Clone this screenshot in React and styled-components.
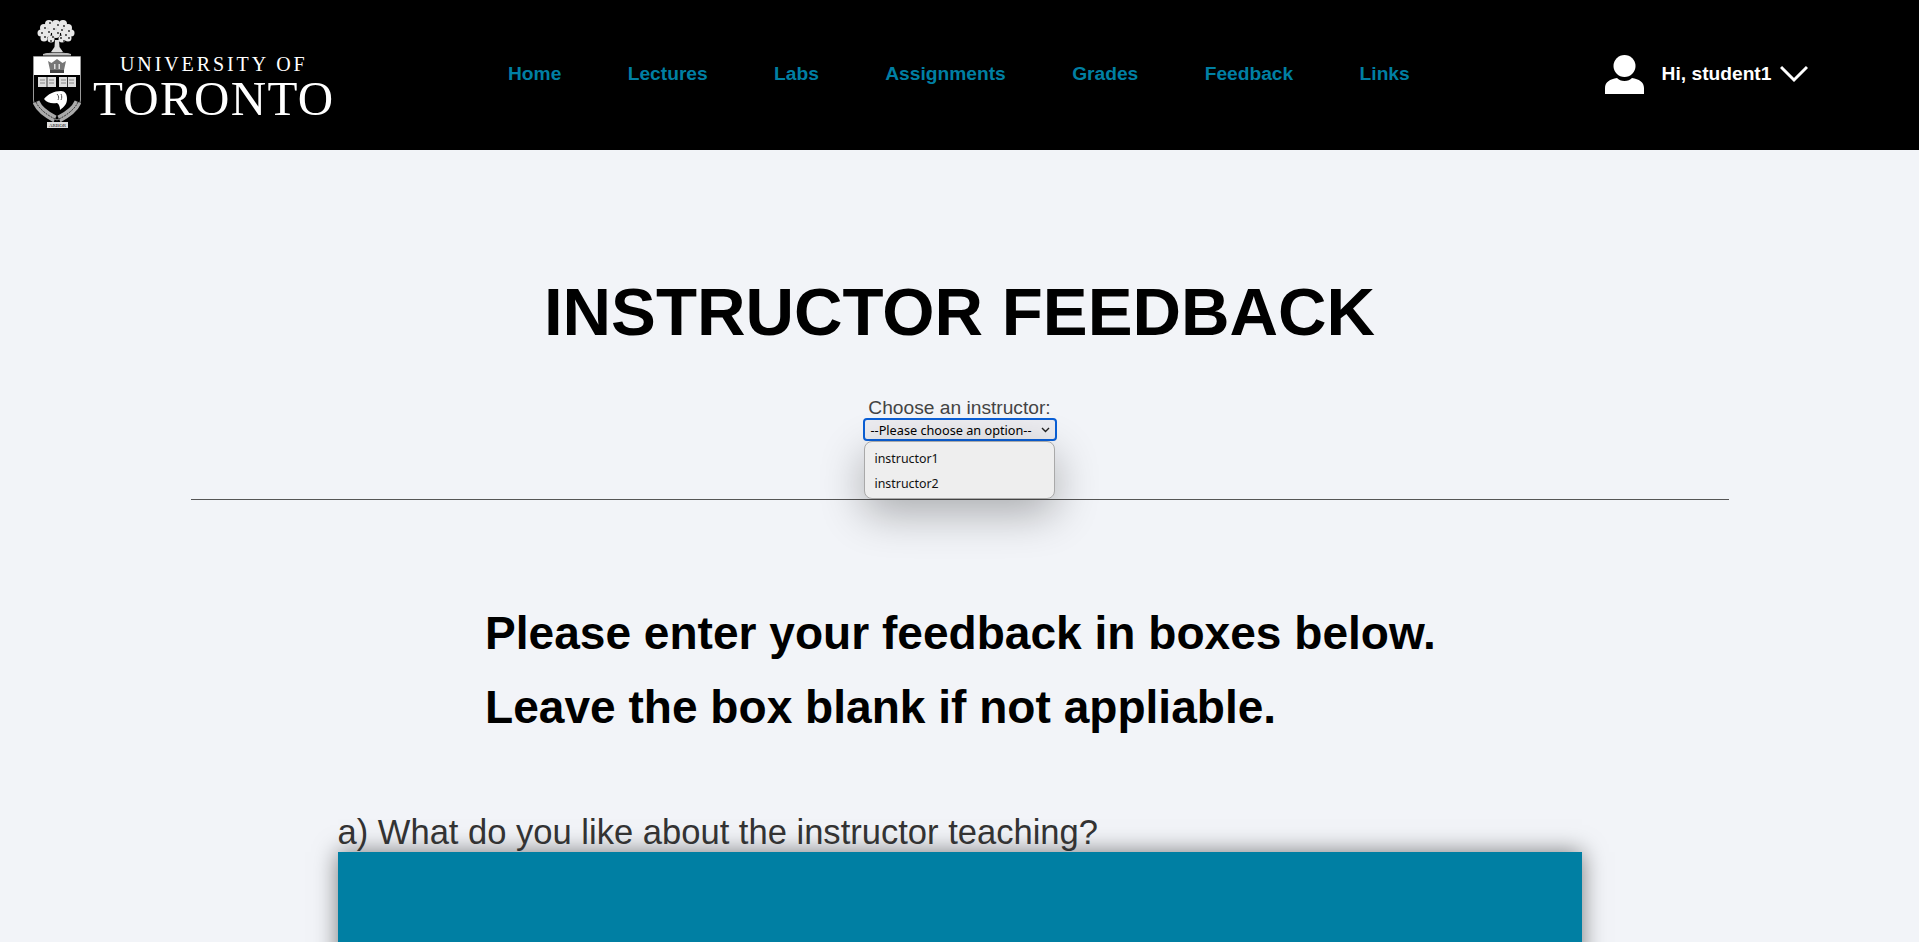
import React from 'react'
import styled, { createGlobalStyle } from 'styled-components'

const GlobalStyle = createGlobalStyle`
    html, body {
        margin: 0;
        padding: 0;
        height: 942px;
        overflow: hidden;
        background: #f2f4f8;
        font-family: "Liberation Sans", Arial, sans-serif;
    }
`
const Header = styled.header`
    height: 150px;
    background: #000;
    display: flex;
    align-items: center;
`
const Logo = styled.div`
    width: 508px;
    box-sizing: border-box;
    padding: 0 0 2px 33px;
    display: flex;
    align-items: center;
    gap: 12px;
    color: #fff;
`
const Wordmark = styled.div`
    display: flex;
    flex-direction: column;
    font-family: "Liberation Serif", "Times New Roman", serif;
    margin-top: 27px;
`
const WordTop = styled.span`
    font-size: 20px;
    line-height: 22px;
    letter-spacing: 2.9px;
    margin-left: 27px;
    white-space: nowrap;
`
const WordBottom = styled.span`
    font-size: 49px;
    line-height: 47px;
    letter-spacing: 1.3px;
`
const Nav = styled.nav`
    display: flex;
    gap: 66.4px;
    padding-bottom: 2px;
`
const NavLink = styled.a`
    color: #007fa3;
    font-size: 19.2px;
    font-weight: bold;
    text-decoration: none;
`
const User = styled.div`
    margin-left: 195.4px;
    display: flex;
    align-items: center;
    color: #fff;
    font-size: 19.2px;
    font-weight: bold;
    padding-bottom: 2px;
`
const UserName = styled.span`
    margin: 0 9px 0 17.5px;
`
const Main = styled.main`
    display: flex;
    flex-direction: column;
    align-items: center;
`
const Title = styled.h1`
    margin: 124px 0 0;
    font-size: 67.2px;
    line-height: 76px;
    font-weight: bold;
    color: #000;
`
const Picker = styled.div`
    position: relative;
    margin-top: 48px;
    display: flex;
    flex-direction: column;
    align-items: center;
`
const PickerLabel = styled.label`
    font-size: 19.2px;
    line-height: 20px;
    color: #444;
`
const SelectBox = styled.div`
    width: 194px;
    height: 23px;
    box-sizing: border-box;
    border: 2px solid #0a5fd6;
    border-radius: 4px;
    background: #ececf0;
    padding: 0 5px 0 6px;
    display: flex;
    align-items: center;
    justify-content: space-between;
    font-family: "Noto Sans", sans-serif;
    font-size: 12.7px;
    color: #000;
`
const Menu = styled.ul`
    position: absolute;
    top: 43px;
    left: 1px;
    width: 191px;
    height: 58px;
    box-sizing: border-box;
    margin: 0;
    padding: 4px 0 0 10px;
    list-style: none;
    background: #eeeeee;
    border: 1px solid #a9a9a9;
    border-radius: 8px;
    box-shadow: 0 14px 44px rgba(0, 0, 0, 0.3);
    font-family: "Noto Sans", sans-serif;
    font-size: 12.4px;
    color: #111;
`
const MenuItem = styled.li`
    line-height: 25px;
`
const Rule = styled.hr`
    width: 1538px;
    height: 1px;
    margin: 58px 0 0;
    border: none;
    background: #555;
`
const Instructions = styled.div`
    width: 950px;
    margin-top: 97px;
    margin-left: 1px;
`
const InstructionLine = styled.h2`
    margin: 0;
    font-size: 46.08px;
    line-height: 73.5px;
    font-weight: bold;
    color: #000;
    white-space: nowrap;
`
const Question = styled.section`
    width: 1244px;
    margin-top: 69px;
`
const QuestionLabel = styled.label`
    display: block;
    font-size: 34.56px;
    line-height: 39px;
    color: #333;
`
const AnswerBox = styled.div`
    height: 300px;
    background: #007fa3;
    box-shadow: 0 0 22px rgba(0, 0, 0, 0.5);
`

// canopy blobs of the crest tree, white with dark flecks on top
const leaves = [
    [23, 4, 4], [16, 4, 4], [30, 4, 4], [11, 8, 4], [35, 8, 4], [8, 13, 3.5], [38, 13, 3.5],
    [19, 9, 4], [27, 9, 4], [14, 13, 4], [32, 13, 4], [23, 14, 4], [11, 18, 3.5], [35, 18, 3.5],
    [18, 19, 3.5], [29, 19, 3.5],
]
const flecks = [
    [17, 3], [25, 5], [31, 6], [12, 8], [21, 9], [29, 10], [36, 11], [9, 13], [16, 12], [25, 13],
    [33, 15], [12, 17], [20, 17], [28, 18], [36, 18], [18, 21], [31, 21],
]

const Crest = () => (
    <svg width="48" height="108" viewBox="0 0 48 108" fill="#fff">
        {leaves.map(([cx, cy, r], i) => <circle key={i} cx={cx} cy={cy} r={r} fill="#e8e8e8" />)}
        {flecks.map(([cx, cy], i) => <circle key={i} cx={cx} cy={cy} r="0.9" fill="#222" />)}
        <path d="M22 20h4l.5 7 3.500 5H18l3.500-5z" fill="#ddd" />
        <path d="M10 34c5-2 23-2 28 0v1.500H10z" fill="#bbb" />
        <path d="M.5 36.500h47V80c0 8-12 14-23.500 20C12 94 .5 88 .5 80z" fill="#000" stroke="#999" />
        <path d="M1 37h46v18H1z" />
        <path d="M15 41l3.500 2 5.500-4 5.500 4 3.500-2-2 9H17z" fill="#777" />
        <path d="M17 50h14v3H17z" fill="#444" />
        <path d="M21 44h1.500v5H21zM25.500 44H27v5h-1.500z" fill="#ddd" />
        <path d="M5 57h18v10H5zM26 57h17v10H26z" fill="#ddd" />
        <path d="M13.500 57h1v10h-1zM34 57h1v10h-1z" fill="#333" />
        <path d="M7 60h5M7 63h5M16 60h5M16 63h5M28 60h5M28 63h5M36 60h5M36 63h5" stroke="#888" />
        <path d="M11 79c4-5 10-8 17-8 4 0 6 3 6 8 0 5-3 8-7 11 0-3-1-6-3-7-5 1-10 0-13-4z" />
        <path d="M24 74c2 2 2 4 1 6M28 74c1 2 1 4 0 6" stroke="#555" fill="none" />
        <path d="M3 82c3 7 11 13 19 17" stroke="#aaa" strokeWidth="7" fill="none" />
        <path d="M45 82c-3 7-11 13-19 17" stroke="#aaa" strokeWidth="7" fill="none" />
        <path d="M3 82c3 7 11 13 19 17M45 82c-3 7-11 13-19 17" stroke="#333" strokeDasharray="2 1" fill="none" />
        <path d="M14 102h21v6H14z" fill="#ddd" />
        <text x="24.500" y="107" fontSize="5" fontFamily="Liberation Serif, serif" textAnchor="middle" fill="#111">ARBOR</text>
    </svg>
)

const UserIcon = () => (
    <svg width="39" height="39" viewBox="0 0 39 39" fill="#fff">
        <circle cx="19.500" cy="11" r="11" />
        <path d="M0 39v-6c0-6 5-9 12-10 2 2 4 3 7.500 3s5.500-1 7.500-3c7 1 12 4 12 10v6z" />
    </svg>
)

const Chevron = () => (
    <svg width="28" height="18" viewBox="0 0 28 18" fill="none" stroke="#fff" strokeWidth="3">
        <path d="M1 2l13 13L27 2" />
    </svg>
)

const SmallChevron = () => (
    <svg width="9" height="6" viewBox="0 0 9 6" fill="none" stroke="#222" strokeWidth="1.400">
        <path d="M1 1l3.500 3.500L8 1" />
    </svg>
)

const links = ['Home', 'Lectures', 'Labs', 'Assignments', 'Grades', 'Feedback', 'Links']

const App = () => {
    return (
        <>
            <GlobalStyle />
            <Header>
                <Logo>
                    <Crest />
                    <Wordmark>
                        <WordTop>UNIVERSITY OF</WordTop>
                        <WordBottom>TORONTO</WordBottom>
                    </Wordmark>
                </Logo>
                <Nav>
                    {links.map((link) => (
                        <NavLink key={link} href="#">{link}</NavLink>
                    ))}
                </Nav>
                <User>
                    <UserIcon />
                    <UserName>Hi, student1</UserName>
                    <Chevron />
                </User>
            </Header>
            <Main>
                <Title>INSTRUCTOR FEEDBACK</Title>
                <Picker>
                    <PickerLabel>Choose an instructor:</PickerLabel>
                    <SelectBox>
                        <span>--Please choose an option--</span>
                        <SmallChevron />
                    </SelectBox>
                    <Menu>
                        <MenuItem>instructor1</MenuItem>
                        <MenuItem>instructor2</MenuItem>
                    </Menu>
                </Picker>
                <Rule />
                <Instructions>
                    <InstructionLine>Please enter your feedback in boxes below.</InstructionLine>
                    <InstructionLine>Leave the box blank if not appliable.</InstructionLine>
                </Instructions>
                <Question>
                    <QuestionLabel>a) What do you like about the instructor teaching?</QuestionLabel>
                    <AnswerBox />
                </Question>
            </Main>
        </>
    )
}

export default App
